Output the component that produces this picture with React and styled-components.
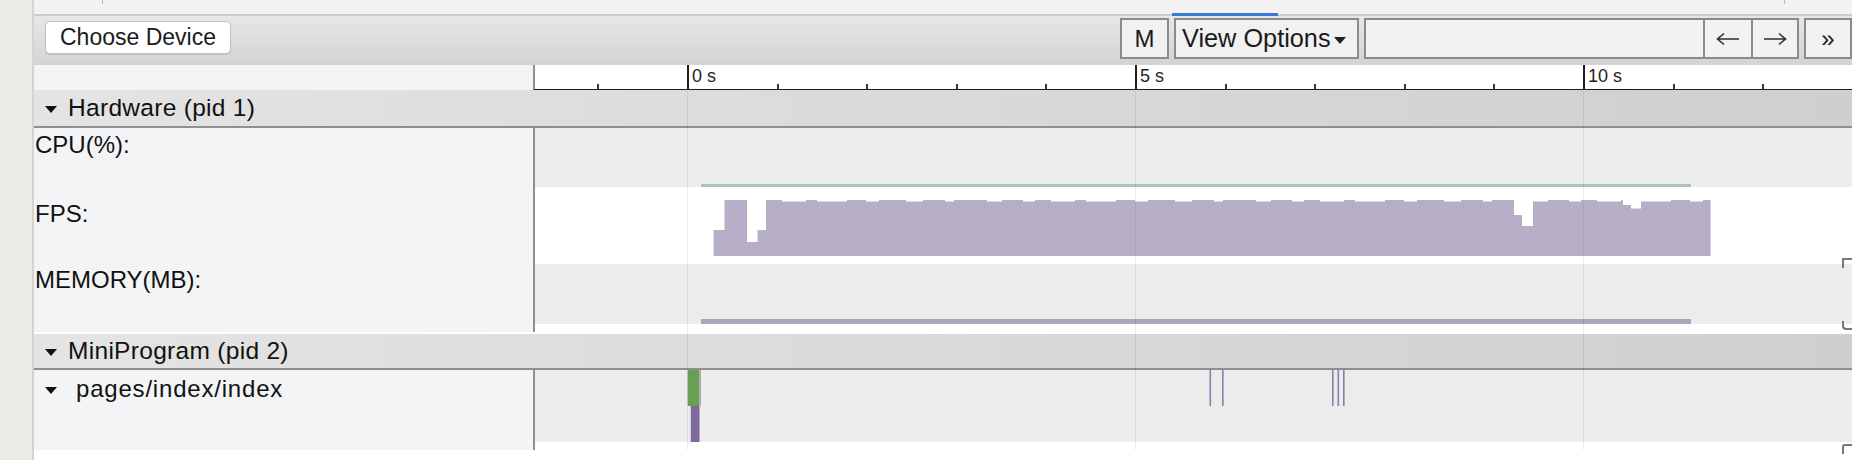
import React from "react";
import styled, { createGlobalStyle } from "styled-components";

const GlobalStyle = createGlobalStyle`
  html, body {
    margin: 0;
    padding: 0;
    background: #fff;
  }
  body {
    font-family: "Liberation Sans", Arial, sans-serif;
    color: #151515;
    overflow: hidden;
  }
  * {
    box-sizing: border-box;
  }
`;

// timeline geometry (page px)
const TRACK_LEFT = 535;
const ZERO_X = 687;
const PX_PER_SEC = 89.6;
const tx = (x) => x - TRACK_LEFT;

const Frame = styled.div`
  display: flex;
  width: 1852px;
  height: 460px;
  overflow: hidden;
`;

const Gutter = styled.div`
  width: 34px;
  flex: none;
  background: #ecebe8;
  border-right: 2px solid #d3d3d1;
`;

const Main = styled.div`
  flex: 1;
  min-width: 0;
  display: flex;
  flex-direction: column;
  background: #fff;
  position: relative;
`;

/* ---------- top tab strip ---------- */

const TopStrip = styled.div`
  height: 16px;
  flex: none;
  display: flex;
  align-items: flex-start;
  background: #f2f2f2;
  border-bottom: 2px solid #cbcbcb;
`;

const StripGap = styled.div`
  width: ${(p) => p.$w}px;
  flex: none;
`;

const StripSep = styled.div`
  width: 1px;
  height: 4px;
  flex: none;
  background: #b9b9b9;
`;

const ActiveTab = styled.div`
  width: 106px;
  height: 16px;
  flex: none;
  border-bottom: 3px solid #3b78d6;
  position: relative;
  z-index: 1;
`;

/* ---------- toolbar ---------- */

const Toolbar = styled.div`
  height: 49px;
  flex: none;
  display: flex;
  align-items: flex-start;
  padding-left: 11px;
  background: linear-gradient(#e7e7e7, #d3d3d3);
  overflow: hidden;
`;

const ChooseButton = styled.button`
  margin-top: 5px;
  height: 33px;
  padding: 0 14px;
  font: 23px "Liberation Sans", Arial, sans-serif;
  color: #1b1b1b;
  background: #fff;
  border: 1px solid #c2c2c2;
  border-radius: 5px;
  box-shadow: 0 1px 1px rgba(0, 0, 0, 0.12);
`;

const ToolGroup = styled.div`
  margin-left: auto;
  margin-top: 2px;
  display: flex;
  gap: 5px;
`;

const ToolButton = styled.div`
  height: 41px;
  width: ${(p) => p.$w}px;
  flex: none;
  display: flex;
  align-items: center;
  justify-content: ${(p) => (p.$left ? "flex-start" : "center")};
  gap: 3px;
  padding: ${(p) => (p.$left ? "0 0 0 6px" : "0")};
  border: 2px solid #8b8b8b;
  background: #f1f1f1;
  font-size: ${(p) => p.$fs || 24}px;
  color: #1a1a1a;
`;

const Caret = styled.span`
  width: 0;
  height: 0;
  margin-top: 3px;
  border-left: 6px solid transparent;
  border-right: 6px solid transparent;
  border-top: 7px solid #222;
`;

const SearchGroup = styled.div`
  height: 41px;
  width: 435px;
  flex: none;
  display: flex;
  border: 2px solid #8b8b8b;
  background: #f2f2f2;
`;

const SearchInput = styled.div`
  flex: 1;
`;

const NavButton = styled.div`
  width: ${(p) => p.$w}px;
  flex: none;
  display: flex;
  align-items: center;
  justify-content: center;
  border-left: 2px solid #8b8b8b;
  color: #2a2a2a;
`;

const ArrowIcon = ({ dir }) => (
  <svg width="24" height="14" viewBox="0 0 24 14" style={{ transform: dir === "right" ? "scaleX(-1)" : "none" }}>
    <path d="M1.5 7 H23 M8 1.5 L1.5 7 L8 12.5" fill="none" stroke="#2e2e2e" strokeWidth="1.6" />
  </svg>
);

/* ---------- ruler ---------- */

const RulerRow = styled.div`
  height: 25px;
  flex: none;
  display: flex;
`;

const LabelColumnCell = styled.div`
  width: 499px;
  flex: none;
  background: #f3f4f6;
`;

const Ruler = styled.div`
  flex: 1;
  position: relative;
  background: #fff;
  border-left: 2px solid #8f8f8f;
  border-bottom: 1px solid #1e1e1e;
`;

const Tick = styled.div`
  position: absolute;
  bottom: 0;
  width: 2px;
  height: ${(p) => (p.$major ? "100%" : "5px")};
  background: ${(p) => (p.$major ? "#1e1e1e" : "#3a3a3a")};
`;

const TickLabel = styled.span`
  position: absolute;
  top: 1px;
  font-size: 18px;
  line-height: 20px;
  color: #1e1e1e;
`;

/* ---------- tracks ---------- */

const Body = styled.div`
  position: relative;
  flex: none;
  display: flex;
  flex-direction: column;
`;

const SectionHeader = styled.div`
  height: ${(p) => p.$h}px;
  flex: none;
  display: flex;
  align-items: center;
  gap: 11px;
  padding-left: 11px;
  background: linear-gradient(to right, #e4e4e4, #cfcfcf);
  border-bottom: 2px solid #8f8f8f;
  font-size: 24.5px;
  letter-spacing: 0.3px;
  color: #111;
`;

const Expander = styled.span`
  width: 0;
  height: 0;
  flex: none;
  margin-top: 2px;
  border-left: 6.5px solid transparent;
  border-right: 6.5px solid transparent;
  border-top: 7px solid #111;
`;

const TrackRow = styled.div`
  height: ${(p) => p.$h}px;
  flex: none;
  display: flex;
`;

const TrackLabel = styled.div`
  display: flex;
  align-items: center;
  gap: ${(p) => p.$gap || 0}px;
  padding: ${(p) => p.$pt}px 0 0 ${(p) => p.$pl}px;
  font-size: 24px;
  line-height: 28px;
  letter-spacing: ${(p) => p.$ls || 0}px;
  color: #111;
`;

const LabelBackdrop = styled.div`
  width: 499px;
  flex: none;
  background: #f3f4f6;
`;

const TrackCell = styled.div`
  flex: 1;
  background: #fff;
  border-left: 2px solid #8f8f8f;
`;

const Lane = styled.svg`
  display: block;
  width: 100%;
  height: ${(p) => p.$h}px;
  background: ${(p) => p.$bg};
`;

const RowGap = styled.div`
  height: ${(p) => p.$h}px;
  flex: none;
`;

const GridOverlay = styled.div`
  position: absolute;
  top: 0;
  bottom: 0;
  left: 501px;
  right: 0;
  pointer-events: none;
`;

const GridLine = styled.div`
  position: absolute;
  top: 0;
  bottom: 0;
  width: 1px;
  background: rgba(0, 0, 0, 0.07);
`;

// slivers of the collapsed side panel peeking in at the right edge
const SideCorner = styled.div`
  position: absolute;
  right: -6px;
  top: ${(p) => p.$top}px;
  width: 16px;
  height: ${(p) => p.$h}px;
  border-left: 2px solid #777;
  border-${(p) => p.$edge}: 2px solid #777;
  border-${(p) => p.$edge}-left-radius: ${(p) => p.$r || 0}px;
`;

/* ---------- data ---------- */

const ticks = [];
for (let k = -1; k <= 13; k++) {
  ticks.push({ x: ZERO_X + k * PX_PER_SEC, major: k % 5 === 0, label: k >= 0 && k % 5 === 0 ? `${k} s` : null });
}

const gridXs = [ZERO_X, ZERO_X + 5 * PX_PER_SEC, ZERO_X + 10 * PX_PER_SEC];

const FPS_TOP = 187;
const FPS_BOTTOM = 256;
const FPS_END = 1710.6;

const fpsSteps = (() => {
  const steps = [
    [713.5, 230],
    [724.5, 200],
    [747, 242],
    [757.5, 230],
  ];
  const widths = [16, 24, 11, 30, 19, 13, 27, 17, 22, 9, 33, 15, 21, 12];
  let n = 0;
  const flat = (from, to) => {
    let x = from;
    while (x < to) {
      steps.push([x, n % 2 ? 201.6 : 200]);
      x += widths[n % widths.length];
      n++;
    }
  };
  flat(766, 1514);
  steps.push([1514, 215], [1522, 226]);
  flat(1533, 1623);
  steps.push([1623, 205], [1631, 208.5]);
  flat(1641, FPS_END);
  return steps;
})();

const fpsPath = (() => {
  const b = FPS_BOTTOM - FPS_TOP;
  let d = `M ${tx(fpsSteps[0][0])} ${b}`;
  fpsSteps.forEach(([x, y], i) => {
    const next = i + 1 < fpsSteps.length ? fpsSteps[i + 1][0] : FPS_END;
    d += ` L ${tx(x)} ${y - FPS_TOP} L ${tx(next)} ${y - FPS_TOP}`;
  });
  d += ` L ${tx(FPS_END)} ${b} Z`;
  return d;
})();

const sliceLines = [1209.5, 1222, 1332, 1337.5, 1343];

/* ---------- component ---------- */

export default function App() {
  return (
    <>
      <GlobalStyle />
      <Frame>
        <Gutter />
        <Main>
          <TopStrip>
            <StripGap $w={68} />
            <StripSep />
            <StripGap $w={1069} />
            <ActiveTab />
            <StripGap $w={506} />
            <StripSep />
          </TopStrip>

          <Toolbar>
            <ChooseButton>Choose Device</ChooseButton>
            <ToolGroup>
              <ToolButton $w={49}>M</ToolButton>
              <ToolButton $w={185} $fs={25.3} $left>
                View Options
                <Caret />
              </ToolButton>
              <SearchGroup>
                <SearchInput />
                <NavButton $w={48}>
                  <ArrowIcon dir="left" />
                </NavButton>
                <NavButton $w={46}>
                  <ArrowIcon dir="right" />
                </NavButton>
              </SearchGroup>
              <ToolButton $w={48}>»</ToolButton>
            </ToolGroup>
          </Toolbar>

          <RulerRow>
            <LabelColumnCell />
            <Ruler>
              {ticks.map((t) => (
                <React.Fragment key={t.x}>
                  <Tick $major={t.major} style={{ left: tx(t.x) }} />
                  {t.label && <TickLabel style={{ left: tx(t.x) + 5 }}>{t.label}</TickLabel>}
                </React.Fragment>
              ))}
            </Ruler>
          </RulerRow>

          <Body>
            <SectionHeader $h={38}>
              <Expander />
              Hardware (pid 1)
            </SectionHeader>

            <TrackRow $h={59}>
              <LabelBackdrop>
                <TrackLabel $pt={3} $pl={1}>CPU(%):</TrackLabel>
              </LabelBackdrop>
              <TrackCell>
                <Lane $h={59} $bg="#ececec">
                  <rect x={tx(701)} y={56} width={990} height={3.3} fill="#a9c5b9" />
                </Lane>
              </TrackCell>
            </TrackRow>

            <TrackRow $h={77}>
              <LabelBackdrop>
                <TrackLabel $pt={13} $pl={1}>FPS:</TrackLabel>
              </LabelBackdrop>
              <TrackCell>
                <Lane $h={77} $bg="#fff">
                  <path d={fpsPath} fill="#b5aec6" />
                </Lane>
              </TrackCell>
            </TrackRow>

            <TrackRow $h={68}>
              <LabelBackdrop>
                <TrackLabel $pt={2} $pl={1}>MEMORY(MB):</TrackLabel>
              </LabelBackdrop>
              <TrackCell>
                <Lane $h={60} $bg="#ececec">
                  <rect x={tx(701)} y={55} width={990} height={5} fill="#aba6be" />
                </Lane>
              </TrackCell>
            </TrackRow>

            <RowGap $h={2} />

            <SectionHeader $h={36}>
              <Expander />
              MiniProgram (pid 2)
            </SectionHeader>

            <TrackRow $h={80}>
              <LabelBackdrop>
                <TrackLabel $pt={5} $pl={11} $gap={19} $ls={0.8}>
                  <Expander />
                  pages/index/index
                </TrackLabel>
              </LabelBackdrop>
              <TrackCell>
                <Lane $h={72} $bg="#ececec">
                  <rect x={tx(687.7)} y={0} width={11.8} height={36} fill="#68a053" />
                  <rect x={tx(699.5)} y={0} width={1.5} height={36} fill="#a8a8a8" />
                  <rect x={tx(690.8)} y={36} width={8.7} height={36} fill="#7d6a9a" />
                  {sliceLines.map((x) => (
                    <rect key={x} x={tx(x)} y={0} width={1.6} height={36} fill="#8a7fb1" />
                  ))}
                </Lane>
              </TrackCell>
            </TrackRow>

            <GridOverlay>
              {gridXs.map((x) => (
                <GridLine key={x} style={{ left: tx(x) }} />
              ))}
            </GridOverlay>
          </Body>

          <SideCorner $top={258} $h={10} $edge="top" />
          <SideCorner $top={321} $h={9} $edge="bottom" $r={4} />
          <SideCorner $top={444} $h={10} $edge="top" $r={3} />
        </Main>
      </Frame>
    </>
  );
}
